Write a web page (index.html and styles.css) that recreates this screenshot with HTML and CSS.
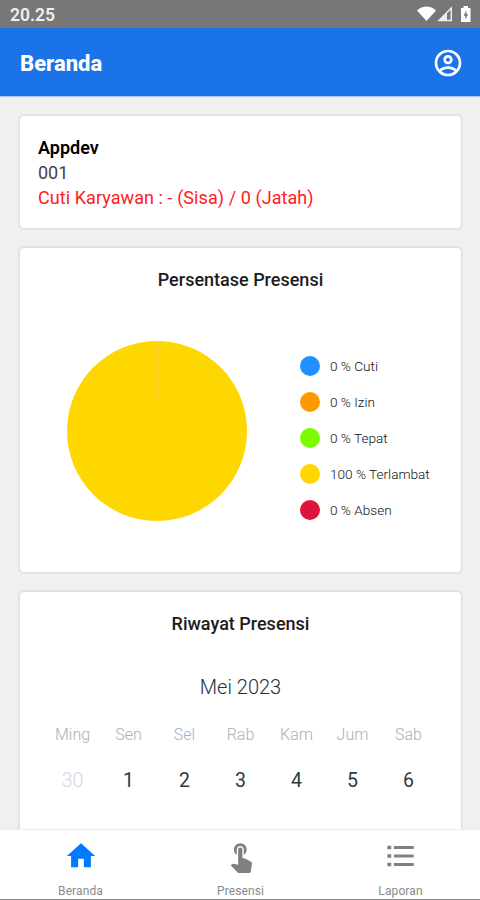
FILE: index.html
```html
<!DOCTYPE html>
<html lang="id">
	<head>
		<meta charset="UTF-8" />
		<meta name="viewport" content="width=device-width, initial-scale=1.0" />
		<title>Beranda</title>
		<link rel="stylesheet" href="styles.css">
	</head>
	<body>
		<div class="app">
			<div class="status-bar">
				<span class="status-time">20.25</span>
				<svg class="status-icons" width="56" height="20" viewBox="0 0 56 20">
					<path fill="#fff" d="M0 6.5C5.500 1 13.500 1 19 6.500L9.500 17Z" />
					<path fill="none" stroke="#eee" stroke-width="1.500" d="M22 16.500H34.300V4Z" />
					<path fill="#eee" d="M22 17H30V8.500Z" />
					<path fill="#fff" d="M44 4H46.500V2H51V4H53.500V18H44Z" />
					<path fill="#777" d="M49.500 6.500L46.500 11.800H48.300V15.500L51.200 10.300H49.500Z" />
				</svg>
			</div>
			<header class="header">
				<h1 class="header-title">Beranda</h1>
				<svg width="32" height="32" viewBox="0 0 24 24" fill="#fff">
					<path d="M12,2A10,10 0 0,0 2,12A10,10 0 0,0 12,22A10,10 0 0,0 22,12A10,10 0 0,0 12,2M7.07,18.28C7.5,17.38 10.12,16.5 12,16.5C13.88,16.5 16.5,17.38 16.93,18.28C15.57,19.36 13.86,20 12,20C10.14,20 8.43,19.36 7.07,18.28M18.36,16.83C16.93,15.09 13.46,14.5 12,14.5C10.54,14.5 7.07,15.09 5.64,16.83C4.62,15.5 4,13.82 4,12C4,7.59 7.59,4 12,4C16.41,4 20,7.59 20,12C20,13.82 19.38,15.5 18.36,16.83M12,6C10.06,6 8.5,7.56 8.5,9.5C8.5,11.44 10.06,13 12,13C13.94,13 15.5,11.44 15.5,9.5C15.5,7.56 13.94,6 12,6M12,11A1.5,1.5 0 0,1 10.5,9.5A1.5,1.5 0 0,1 12,8A1.5,1.5 0 0,1 13.5,9.5A1.5,1.5 0 0,1 12,11Z" />
				</svg>
			</header>
			<main class="content">
				<section class="card profile">
					<p class="profile-name">Appdev</p>
					<p class="profile-id">001</p>
					<p class="profile-leave">Cuti Karyawan : - (Sisa) / 0 (Jatah)</p>
				</section>
				<section class="card stats">
					<h2 class="card-title">Persentase Presensi</h2>
					<div class="chart">
						<svg class="pie" width="181" height="181" viewBox="0 0 181 181">
							<circle cx="90" cy="90" r="90" fill="#ffd700" />
							<path d="M90.500 2V58" stroke="#ffd21e" stroke-width="3" />
						</svg>
						<ul class="legend">
							<li><span class="dot cuti"></span>0 % Cuti</li>
							<li><span class="dot izin"></span>0 % Izin</li>
							<li><span class="dot tepat"></span>0 % Tepat</li>
							<li><span class="dot terlambat"></span>100 % Terlambat</li>
							<li><span class="dot absen"></span>0 % Absen</li>
						</ul>
					</div>
				</section>
				<section class="card history">
					<h2 class="card-title">Riwayat Presensi</h2>
					<p class="month">Mei 2023</p>
					<div class="calendar">
						<span class="weekday">Ming</span>
						<span class="weekday">Sen</span>
						<span class="weekday">Sel</span>
						<span class="weekday">Rab</span>
						<span class="weekday">Kam</span>
						<span class="weekday">Jum</span>
						<span class="weekday">Sab</span>
						<span class="day other-month">30</span>
						<span class="day">1</span>
						<span class="day">2</span>
						<span class="day">3</span>
						<span class="day">4</span>
						<span class="day">5</span>
						<span class="day">6</span>
					</div>
				</section>
			</main>
			<nav class="tab-bar">
				<a class="tab active" href="#">
					<svg width="34" height="34" viewBox="0 0 24 24"><path d="M10 20v-6h4v6h5v-8h3L12 3 2 12h3v8z" /></svg>
					<span>Beranda</span>
				</a>
				<a class="tab" href="#">
					<svg width="34" height="34" viewBox="0 0 24 24"><path d="M9 11.24V7.5C9 6.12 10.12 5 11.5 5S14 6.12 14 7.5v3.74c1.21-.81 2-2.18 2-3.74C16 5.01 13.99 3 11.5 3S7 5.01 7 7.5c0 1.56.79 2.93 2 3.74zm9.84 4.63l-4.54-2.26c-.17-.07-.35-.11-.54-.11H13v-6c0-.83-.67-1.5-1.5-1.5S10 6.67 10 7.5v10.74l-3.43-.72c-.08-.01-.15-.03-.24-.03-.31 0-.59.13-.79.33l-.79.8 4.94 4.94c.27.27.65.44 1.06.44h6.79c.75 0 1.33-.55 1.44-1.28l.75-5.27c.01-.07.02-.14.02-.2 0-.62-.38-1.16-.91-1.38z" /></svg>
					<span>Presensi</span>
				</a>
				<a class="tab" href="#">
					<svg width="34" height="34" viewBox="0 0 24 24"><path d="M2.400 4.700h2.700v2.600h-2.700zM2.400 10.700h2.700v2.600h-2.700zM2.400 16.700h2.700v2.600h-2.700zM7 5v2h14V5zM7 11v2h14v-2zM7 17v2h14v-2z" /></svg>
					<span>Laporan</span>
				</a>
			</nav>
		</div>
	</body>
</html>
```
FILE: styles.css
```css
* {
	box-sizing: border-box;
	margin: 0;
	padding: 0;
}
body {
	font-family: Roboto, "Liberation Sans", sans-serif;
	background-color: #f0f0f0;
}
.app {
	display: flex;
	flex-direction: column;
	height: 900px;
	overflow: hidden;
}
.status-bar {
	flex: none;
	display: flex;
	justify-content: space-between;
	align-items: center;
	height: 28px;
	padding: 0 7px 0 10px;
	background-color: #777;
	color: #f0f0f0;
}
.status-time {
	font-size: 17.5px;
	font-weight: 600;
	padding-top: 1px;
}
.header {
	flex: none;
	display: flex;
	justify-content: space-between;
	align-items: center;
	height: 69px;
	padding: 1px 16px 0 20px;
	background-color: #1a73e8;
	color: white;
	border-bottom: 1px solid #a9c8f3;
}
.header-title {
	font-size: 22px;
	font-weight: 800;
	padding-top: 1px;
}
.content {
	flex: 1;
	min-height: 0;
	display: flex;
	flex-direction: column;
	gap: 20px;
	padding: 19px 19px 0 20px;
	overflow: hidden;
}
.card {
	flex: none;
	background-color: white;
	border-radius: 4px;
	box-shadow: 0 0 3px rgba(0, 0, 0, 0.22);
}
.profile {
	height: 112px;
	padding: 19px 18px;
	font-size: 18px;
	line-height: 25px;
	color: #444;
}
.profile-name {
	color: #000;
	font-weight: 600;
}
.profile-leave {
	color: #ff2020;
	letter-spacing: 0.07px;
}
.card-title {
	font-size: 18px;
	font-weight: 500;
	line-height: 24px;
	text-align: center;
	color: #1c1c1c;
}
.stats {
	height: 324px;
	padding-top: 20px;
}
.chart {
	display: flex;
	align-items: center;
	gap: 52px;
	margin-top: 49px;
	padding-left: 47px;
}
.legend {
	display: flex;
	flex-direction: column;
	gap: 16px;
	margin-top: 12px;
	list-style: none;
}
.legend li {
	display: flex;
	align-items: center;
	gap: 10px;
	height: 20px;
	font-size: 13.6px;
	font-weight: 300;
	color: #111;
	white-space: nowrap;
}
.dot {
	width: 20px;
	height: 20px;
	border-radius: 50%;
}
.cuti {
	background-color: #1e90ff;
}
.izin {
	background-color: #ff9800;
}
.tepat {
	background-color: #7cfc00;
}
.terlambat {
	background-color: #ffd700;
}
.absen {
	background-color: #dc143c;
}
.history {
	height: 500px;
	padding-top: 20px;
}
.month {
	margin-top: 39px;
	font-size: 20px;
	font-weight: 300;
	line-height: 24px;
	text-align: center;
	color: #1d3140;
}
.calendar {
	display: grid;
	grid-template-columns: repeat(7, 56px);
	justify-content: center;
	row-gap: 22px;
	margin-top: 26px;
	text-align: center;
}
.weekday {
	font-size: 16px;
	font-weight: 300;
	line-height: 20px;
	color: #a6b1bd;
}
.day {
	font-size: 19.5px;
	line-height: 28px;
	color: #2d3a44;
}
.other-month {
	font-weight: 300;
	color: #d0d8df;
}
.tab-bar {
	flex: none;
	display: flex;
	height: 71px;
	background-color: white;
	border-top: 1px solid #ececec;
	border-bottom: 1px solid #888;
}
.tab {
	flex: 1;
	display: flex;
	flex-direction: column;
	align-items: center;
	gap: 10px;
	padding: 9px 0 0 1px;
	font-size: 12px;
	line-height: 16px;
	letter-spacing: 0.1px;
	color: #8a8a8a;
	text-decoration: none;
}
.tab svg {
	fill: #808080;
}
.tab.active svg {
	fill: #007bff;
}
```
